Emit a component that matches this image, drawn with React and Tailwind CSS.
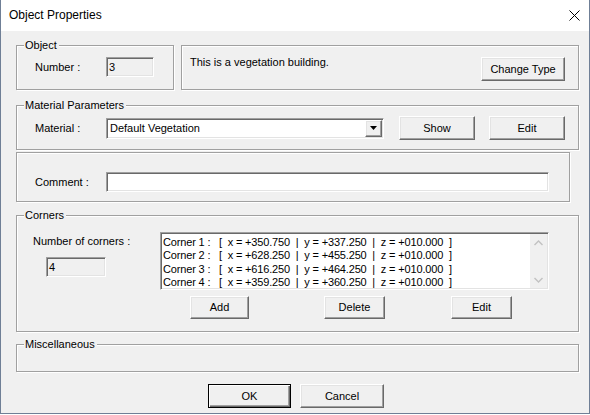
import React from 'react'

// classic 3D frames
const raised =
  'border border-t-white border-l-white border-r-[#696969] border-b-[#696969] shadow-[inset_-1px_-1px_0_#a0a0a0,inset_1px_1px_0_#e3e3e3] bg-[#f0f0f0]'
const sunken =
  'border border-t-[#a0a0a0] border-l-[#a0a0a0] border-r-white border-b-white shadow-[inset_1px_1px_0_#696969,inset_-1px_-1px_0_#e3e3e3]'

const CORNERS = [
  'Corner 1 :   [  x = +350.750  |  y = +337.250  |  z = +010.000  ]',
  'Corner 2 :   [  x = +628.250  |  y = +455.250  |  z = +010.000  ]',
  'Corner 3 :   [  x = +616.250  |  y = +464.250  |  z = +010.000  ]',
  'Corner 4 :   [  x = +359.250  |  y = +360.250  |  z = +010.000  ]',
]

function Group({ label, className = '', children }) {
  return (
    <div
      className={`relative shrink-0 border border-[#a0a0a0] shadow-[inset_1px_1px_0_#fff,1px_1px_0_#fff] ${className}`}
    >
      {label && (
        <span className="absolute left-[7px] -top-[7px] bg-[#f0f0f0] pl-px pr-[2px] leading-[13px]">
          {label}
        </span>
      )}
      {children}
    </div>
  )
}

function Button({ children, className = '' }) {
  return (
    <button className={`${raised} flex shrink-0 items-center justify-center ${className}`}>
      {children}
    </button>
  )
}

function Chevron({ up }) {
  return (
    <svg width="9" height="6" viewBox="0 0 9 6">
      <path
        d={up ? 'M0.5 5 L4.5 1 L8.5 5' : 'M0.5 1 L4.5 5 L8.5 1'}
        fill="none"
        stroke="#c2c2c2"
        strokeWidth="1.4"
      />
    </svg>
  )
}

export default function App() {
  return (
    <div className="h-[415px] w-[590px] bg-white">
      <div className="flex h-[414px] w-[590px] flex-col border-x border-b border-[#6f7f96] bg-[#f0f0f0] font-['Liberation_Sans',Arial,sans-serif] text-[11px] leading-[13px] text-black">
        {/* title bar */}
        <div className="flex h-[31px] shrink-0 items-center justify-between bg-white pl-[8px] pr-[9px] text-[12px]">
          <span>Object Properties</span>
          <svg width="11" height="11" viewBox="0 0 11 11">
            <path d="M0.5 0.5 L10.5 10.5 M10.5 0.5 L0.5 10.5" stroke="#000" strokeWidth="1" />
          </svg>
        </div>

        <div className="flex flex-col pl-[15px]">
          {/* object */}
          <div className="mt-[14px] flex h-[45px] gap-[7px]">
            <Group label="Object" className="h-[45px] w-[158px] pl-[18px] pt-[11px]">
              <div className="flex items-center">
                <span className="w-[71px]">Number :</span>
                <div className={`${sunken} flex h-[20px] w-[48px] items-center pl-[2px]`}>3</div>
              </div>
            </Group>
            <Group className="flex h-[45px] w-[398px] items-start pl-[8px]">
              <span className="mt-[10px]">This is a vegetation building.</span>
              <Button className="ml-auto mr-[13px] mt-[11px] h-[24px] w-[84px]">Change Type</Button>
            </Group>
          </div>

          {/* material */}
          <Group label="Material Parameters" className="mt-[15px] h-[45px] w-[563px] pl-[18px] pt-[10px]">
            <div className="flex h-[24px] items-center">
              <span className="w-[71px]">Material :</span>
              <div className={`${sunken} flex h-[21px] w-[278px] items-center bg-white pl-[3px]`}>
                <span className="flex-1">Default Vegetation</span>
                <div className={`${raised} mr-px flex h-[17px] w-[17px] items-center justify-center`}>
                  <svg width="7" height="4" viewBox="0 0 7 4">
                    <polygon points="0,0 7,0 3.5,4" fill="#000" />
                  </svg>
                </div>
              </div>
              <Button className="ml-[15px] h-[24px] w-[76px]">Show</Button>
              <Button className="ml-[14px] h-[24px] w-[76px]">Edit</Button>
            </div>
          </Group>

          {/* comment */}
          <Group className="mt-[2px] h-[50px] w-[554px] pl-[18px] pt-[19px]">
            <div className="flex items-center">
              <span className="w-[71px]">Comment :</span>
              <div className={`${sunken} h-[20px] w-[443px] bg-white`} />
            </div>
          </Group>

          {/* corners */}
          <Group label="Corners" className="mt-[13px] flex h-[117px] w-[563px] flex-col pl-[16px] pt-[16px]">
            <div className="flex items-start">
              <div className="flex w-[127px] flex-col">
                <span className="mt-[3px]">Number of corners :</span>
                <div className={`${sunken} ml-[13px] mt-[9px] flex h-[20px] w-[60px] items-center pl-[2px]`}>4</div>
              </div>
              <div className={`${sunken} flex h-[58px] w-[389px] bg-white p-px`}>
                <div className="flex-1 whitespace-pre pl-px pt-[2px] leading-[13.3px] tracking-[-0.16px]">
                  {CORNERS.map((c) => (
                    <div key={c}>{c}</div>
                  ))}
                </div>
                <div className="flex w-[17px] flex-col justify-between bg-[#f0f0f0]">
                  <div className="flex h-[17px] items-center justify-center">
                    <Chevron up />
                  </div>
                  <div className="flex h-[17px] items-center justify-center">
                    <Chevron />
                  </div>
                </div>
              </div>
            </div>
            <div className="mt-[6px] flex">
              <Button className="ml-[157px] h-[23px] w-[59px]">Add</Button>
              <Button className="ml-[75px] h-[23px] w-[61px]">Delete</Button>
              <Button className="ml-[66px] h-[23px] w-[61px]">Edit</Button>
            </div>
          </Group>

          {/* misc */}
          <Group label="Miscellaneous" className="mt-[12px] h-[28px] w-[563px]" />

          {/* dialog buttons */}
          <div className="mt-[12px] flex">
            <button className="ml-[192px] flex h-[24px] w-[83px] items-center justify-center border border-black bg-[#f0f0f0] shadow-[inset_1px_1px_0_#fff,inset_-1px_-1px_0_#696969,inset_-2px_-2px_0_#a0a0a0]">
              OK
            </button>
            <Button className="ml-[9px] h-[24px] w-[84px]">Cancel</Button>
          </div>
        </div>
      </div>
    </div>
  )
}
